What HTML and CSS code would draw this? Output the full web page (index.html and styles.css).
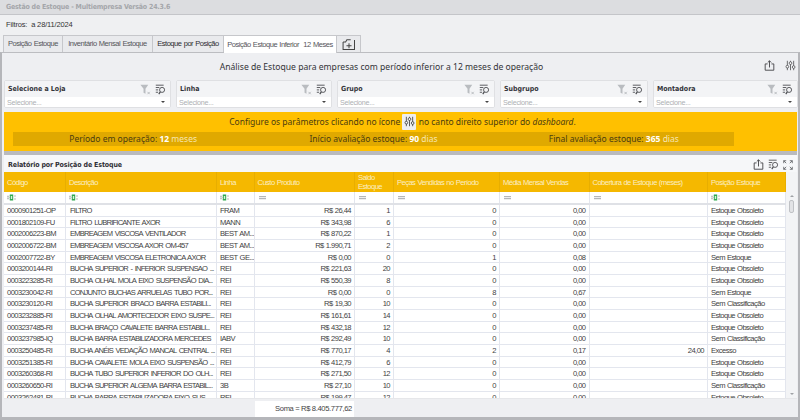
FILE: index.html
```html
<!DOCTYPE html>
<html lang="pt-BR">
<head>
<meta charset="utf-8">
<title>Gestão de Estoque</title>
<link rel="stylesheet" href="styles.css">
</head>
<body>
<svg class="defs" width="0" height="0" aria-hidden="true">
  <symbol id="i-export" viewBox="0 0 14 14"><path d="M4.5 5H1.5V13H12.5V5H9.5M7 9.5V1M4.8 3.2L7 1L9.2 3.2" fill="none" stroke="currentColor" stroke-width="1.2"/></symbol>
  <symbol id="i-sliders" viewBox="0 0 14 14"><g fill="none" stroke="currentColor" stroke-width="1"><path d="M3 1V13M7 1V13M11 1V13"/><circle cx="3" cy="8.5" r="1.7" fill="#fff"/><circle cx="7" cy="4" r="1.7" fill="#fff"/><circle cx="11" cy="9" r="1.7" fill="#fff"/></g></symbol>
  <symbol id="i-chooser" viewBox="0 0 14 14"><g fill="none" stroke="currentColor" stroke-width="1.1"><path d="M1 1.5H11M1 4.5H5.5M1 7.5H4M1 10.5H4"/><circle cx="9" cy="7.5" r="3.2"/><path d="M6.8 10L4.8 12.8" stroke-width="1.5"/></g></symbol>
  <symbol id="i-clear" viewBox="0 0 14 14"><path d="M0.5 1H10.5L7 6V12.5L4.5 11V6Z" fill="#b9bcc0"/><path d="M9.5 10L12.5 13M12.5 10L9.5 13" stroke="#a8abb0" stroke-width="0.9"/></symbol>
  <symbol id="i-full" viewBox="0 0 14 14"><path d="M1 4.5V1H4.5M1 1L4.5 4.5M13 4.5V1H9.5M13 1L9.5 4.5M1 9.5V13H4.5M1 13L4.5 9.5M13 9.5V13H9.5M13 13L9.5 9.5" fill="none" stroke="currentColor" stroke-width="1.1"/></symbol>
  <symbol id="i-newtab" viewBox="0 0 16 13"><path d="M1 3.5H4L5.5 1H10M1 3.5V12.5H14.5V1.2" fill="none" stroke="currentColor" stroke-width="1.2"/><path d="M8 5V11M5 8H11" stroke="currentColor" stroke-width="1.2"/></symbol>
  <symbol id="i-text" viewBox="0 0 9 7"><path d="M0 1.5L2 3.5L0 5.5M2 1.5L0 3.5L2 5.5" fill="none" stroke="#8a8d92" stroke-width=".6"/><rect x="2.8" y=".5" width="3.4" height="6" fill="#2fa84f"/><rect x="3.8" y="2" width="1.4" height="3" fill="#d8f0dd"/><path d="M7.5 2H8.5M7.5 5H8.5" stroke="#777" stroke-width="1"/></symbol>
  <symbol id="i-eq" viewBox="0 0 9 7"><path d="M1 2.7H8M1 4.7H8" stroke="#a3a6ab" stroke-width="1"/></symbol>
</svg>

<div class="app">
  <div class="titlebar">Gestão de Estoque - Multiempresa Versão 24.3.6</div>
  <div class="filterbar">Filtros:&nbsp; a 28/11/2024</div>

  <div class="tabs">
    <div class="tab t1">Posição Estoque</div>
    <div class="tab t2">Inventário Mensal Estoque</div>
    <div class="tab t3 dark">Estoque por Posição</div>
    <div class="tab t4 active">Posição Estoque Inferior&nbsp; 12 Meses</div>
    <div class="tab t5"><svg class="newtab"><use href="#i-newtab"/></svg></div>
  </div>

  <div class="panel">
    <div class="heading">
      <div class="heading-title">Análise de Estoque para empresas com período inferior a 12 meses de operação</div>
      <div class="heading-icons">
        <svg class="ico"><use href="#i-export"/></svg>
        <svg class="ico"><use href="#i-sliders"/></svg>
      </div>
    </div>

    <div class="filters">
      <div class="fcard"><div class="fhead"><b>Selecione a Loja</b><svg class="ico-s"><use href="#i-clear"/></svg><svg class="ico-s dark-i"><use href="#i-chooser"/></svg></div><div class="finput"><span>Selecione...</span><i class="caret"></i></div></div>
      <div class="fcard"><div class="fhead"><b>Linha</b><svg class="ico-s"><use href="#i-clear"/></svg><svg class="ico-s dark-i"><use href="#i-chooser"/></svg></div><div class="finput"><span>Selecione...</span><i class="caret"></i></div></div>
      <div class="fcard"><div class="fhead"><b>Grupo</b><svg class="ico-s"><use href="#i-clear"/></svg><svg class="ico-s dark-i"><use href="#i-chooser"/></svg></div><div class="finput"><span>Selecione...</span><i class="caret"></i></div></div>
      <div class="fcard"><div class="fhead"><b>Subgrupo</b><svg class="ico-s"><use href="#i-clear"/></svg><svg class="ico-s dark-i"><use href="#i-chooser"/></svg></div><div class="finput"><span>Selecione...</span><i class="caret"></i></div></div>
      <div class="fcard"><div class="fhead"><b>Montadora</b><svg class="ico-s"><use href="#i-clear"/></svg><svg class="ico-s dark-i"><use href="#i-chooser"/></svg></div><div class="finput"><span>Selecione...</span><i class="caret"></i></div></div>
    </div>

    <div class="notice">
      <div class="notice-top">Configure os parâmetros clicando no ícone <span class="notice-icon"><svg class="ico-n"><use href="#i-sliders"/></svg></span> no canto direito superior do <em>dashboard</em>.</div>
      <div class="notice-bar">
        <div>Período em operação: <b>12</b> <span>meses</span></div>
        <div>Início avaliação estoque: <b>90</b> <span>dias</span></div>
        <div>Final avaliação estoque: <b>365</b> <span>dias</span></div>
      </div>
    </div>

    <div class="report">
      <div class="report-head">
        <b>Relatório por Posição de Estoque</b>
        <div class="report-icons">
          <svg class="ico"><use href="#i-export"/></svg>
          <svg class="ico"><use href="#i-chooser"/></svg>
          <svg class="ico-f"><use href="#i-full"/></svg>
        </div>
      </div>

      <div class="grid-wrap">
        <div class="grid-main">
          <div class="row hdr">
            <div>Código</div><div>Descrição</div><div>Linha</div><div>Custo Produto</div><div>Saldo Estoque</div><div>Peças Vendidas no Período</div><div>Média Mensal Vendas</div><div>Cobertura de Estoque (meses)</div><div>Posição Estoque</div>
          </div>
          <div class="row flt">
            <div><svg class="fi"><use href="#i-text"/></svg></div><div><svg class="fi"><use href="#i-text"/></svg></div><div><svg class="fi"><use href="#i-text"/></svg></div><div><svg class="fi"><use href="#i-eq"/></svg></div><div><svg class="fi"><use href="#i-eq"/></svg></div><div><svg class="fi"><use href="#i-eq"/></svg></div><div><svg class="fi"><use href="#i-eq"/></svg></div><div><svg class="fi"><use href="#i-eq"/></svg></div><div><svg class="fi"><use href="#i-text"/></svg></div>
          </div>
          <div class="rows">
            <div class="row"><div>0000901251-OP</div><div>FILTRO</div><div>FRAM</div><div class="r">R$ 26,44</div><div class="r">1</div><div class="r">0</div><div class="r">0,00</div><div class="r"></div><div>Estoque Obsoleto</div></div>
            <div class="row"><div>0001802109-FU</div><div>FILTRO LUBRIFICANTE AXOR</div><div>MANN</div><div class="r">R$ 343,98</div><div class="r">6</div><div class="r">0</div><div class="r">0,00</div><div class="r"></div><div>Estoque Obsoleto</div></div>
            <div class="row"><div>0002006223-BM</div><div>EMBREAGEM VISCOSA VENTILADOR</div><div>BEST AM...</div><div class="r">R$ 870,22</div><div class="r">1</div><div class="r">0</div><div class="r">0,00</div><div class="r"></div><div>Estoque Obsoleto</div></div>
            <div class="row"><div>0002006722-BM</div><div>EMBREAGEM VISCOSA AXOR OM-457</div><div>BEST AM...</div><div class="r">R$ 1.990,71</div><div class="r">2</div><div class="r">0</div><div class="r">0,00</div><div class="r"></div><div>Estoque Obsoleto</div></div>
            <div class="row"><div>0002007722-BY</div><div>EMBREAGEM VISCOSA ELETRONICA AXOR</div><div>BEST GE...</div><div class="r">R$ 0,00</div><div class="r">0</div><div class="r">1</div><div class="r">0,08</div><div class="r"></div><div>Sem Estoque</div></div>
            <div class="row"><div>0003200144-RI</div><div>BUCHA SUPERIOR - INFERIOR SUSPENSAO ...</div><div>REI</div><div class="r">R$ 221,63</div><div class="r">20</div><div class="r">0</div><div class="r">0,00</div><div class="r"></div><div>Estoque Obsoleto</div></div>
            <div class="row"><div>0003223285-RI</div><div>BUCHA OLHAL MOLA EIXO SUSPENSÃO DIA...</div><div>REI</div><div class="r">R$ 550,39</div><div class="r">8</div><div class="r">0</div><div class="r">0,00</div><div class="r"></div><div>Estoque Obsoleto</div></div>
            <div class="row"><div>0003230042-RI</div><div>CONJUNTO BUCHAS ARRUELAS TUBO POR...</div><div>REI</div><div class="r">R$ 0,00</div><div class="r">0</div><div class="r">8</div><div class="r">0,67</div><div class="r"></div><div>Sem Estoque</div></div>
            <div class="row"><div>0003230120-RI</div><div>BUCHA SUPERIOR BRACO BARRA ESTABILI...</div><div>REI</div><div class="r">R$ 19,30</div><div class="r">10</div><div class="r">0</div><div class="r">0,00</div><div class="r"></div><div>Sem Classificação</div></div>
            <div class="row"><div>0003232885-RI</div><div>BUCHA OLHAL AMORTECEDOR EIXO SUSPE...</div><div>REI</div><div class="r">R$ 161,61</div><div class="r">14</div><div class="r">0</div><div class="r">0,00</div><div class="r"></div><div>Estoque Obsoleto</div></div>
            <div class="row"><div>0003237485-RI</div><div>BUCHA BRAÇO CAVALETE BARRA ESTABILI...</div><div>REI</div><div class="r">R$ 432,18</div><div class="r">12</div><div class="r">0</div><div class="r">0,00</div><div class="r"></div><div>Estoque Obsoleto</div></div>
            <div class="row"><div>0003237985-IQ</div><div>BUCHA BARRA ESTABILIZADORA MERCEDES</div><div>IABV</div><div class="r">R$ 292,49</div><div class="r">10</div><div class="r">0</div><div class="r">0,00</div><div class="r"></div><div>Sem Classificação</div></div>
            <div class="row"><div>0003250485-RI</div><div>BUCHA ANÉIS VEDAÇÃO MANCAL CENTRAL ...</div><div>REI</div><div class="r">R$ 770,17</div><div class="r">4</div><div class="r">2</div><div class="r">0,17</div><div class="r">24,00</div><div>Excesso</div></div>
            <div class="row"><div>0003251385-RI</div><div>BUCHA CAVALETE MOLA EIXO SUSPENSÃO ...</div><div>REI</div><div class="r">R$ 412,79</div><div class="r">6</div><div class="r">0</div><div class="r">0,00</div><div class="r"></div><div>Estoque Obsoleto</div></div>
            <div class="row"><div>0003260368-RI</div><div>BUCHA TUBO SUPERIOR INFERIOR DO OLH...</div><div>REI</div><div class="r">R$ 271,50</div><div class="r">12</div><div class="r">0</div><div class="r">0,00</div><div class="r"></div><div>Estoque Obsoleto</div></div>
            <div class="row"><div>0003260650-RI</div><div>BUCHA SUPERIOR ALGEMA BARRA ESTABIL...</div><div>3B</div><div class="r">R$ 27,10</div><div class="r">10</div><div class="r">0</div><div class="r">0,00</div><div class="r"></div><div>Sem Classificação</div></div>
            <div class="row"><div>0003262481-RI</div><div>BUCHA BARRA ESTABILIZADORA EIXO SUS...</div><div>REI</div><div class="r">R$ 199,47</div><div class="r">12</div><div class="r">0</div><div class="r">0,00</div><div class="r"></div><div>Estoque Obsoleto</div></div>
          </div>
        </div>
        <div class="scroll-area">
          <div class="scroll-top"></div>
          <div class="scroll-track"><i class="arrow up"></i><i class="thumb"></i><i class="arrow down"></i></div>
        </div>
      </div>

      <div class="footer"><div class="sum">Soma = R$ 8.405.777,62</div></div>
    </div>
  </div>
</div>
</body>
</html>
```
FILE: styles.css
```css
* { box-sizing: border-box; }
html, body { margin: 0; height: 100%; overflow: hidden; }
body { font-family: "Liberation Sans", Arial, sans-serif; color: #3f3f42; background: #eff0f2; }
.defs { position: absolute; }
.app { width: 800px; height: 420px; display: flex; flex-direction: column; overflow: hidden; }

.titlebar { height: 15px; padding-left: 6px; background: #dcdde0; border-bottom: 1px solid #c4c5c9; font: bold 7px/14px "DejaVu Sans Condensed", "DejaVu Sans", sans-serif; letter-spacing: -.2px; color: #a4a6aa; }
.filterbar { height: 20px; padding-left: 6px; font-size: 7.5px; letter-spacing: -.15px; line-height: 19px; color: #333; background: #eff0f2; }

.tabs { height: 17px; display: flex; padding-left: 3px; align-items: flex-end; position: relative; z-index: 1; }
.tab { height: 17px; font-size: 7.5px; letter-spacing: -.45px; word-spacing: .5px; line-height: 16px; text-align: center; color: #55555a; background: #e9eaed; border: 1px solid #c6c7cb; border-bottom: 0; border-left: 0; white-space: nowrap; }
.t1 { width: 60px; border-left: 1px solid #c6c7cb; }
.t2 { width: 90px; }
.t3 { width: 71px; }
.t4 { width: 113px; height: 18px; background: #fff; line-height: 17px; margin-bottom: -1px; color: #55555a; }
.t5 { width: 24px; display: flex; align-items: center; justify-content: center; }
.dark { color: #2c2c30; }
.newtab { width: 14px; height: 11px; color: #444; }

.panel { flex: 1; min-height: 0; display: flex; flex-direction: column; background: #eeeff2; border: 2px solid #b5b6ba; border-top: 1px solid #bcbdc1; border-bottom: 3px solid #b5b6ba; padding: 0 1px 0 2px; }

.heading { height: 27px; flex: none; display: flex; align-items: center; position: relative; justify-content: center; }
.heading-title { font: 8.6px/14px "Noto Sans", sans-serif; color: #333337; margin: 0 38px 0 0; }
.heading-icons { position: absolute; right: 1px; top: 7px; display: flex; gap: 10px; }
.ico { width: 11px; height: 11px; color: #4a4a4e; }
.ico-s { width: 11px; height: 11px; margin-left: 4px; }
.ico-f { width: 10px; height: 10px; color: #55585c; }
.dark-i { color: #44464a; }

.filters { display: grid; grid-template-columns: 167px 156px 158px 148px 145px; column-gap: 5px; height: 28px; flex: none; }
.fcard { border: 1px solid #dfe0e3; border-radius: 2px; display: flex; flex-direction: column; background: #fff; overflow: hidden; }
.fhead { height: 16px; background: #f3f4f6; display: flex; align-items: center; padding: 0 4px 0 3px; }
.fhead b { flex: 1; font: bold 7px "DejaVu Sans Condensed", "DejaVu Sans", sans-serif; color: #34343a; }
.finput { flex: 1; display: flex; align-items: center; justify-content: space-between; padding: 0 5px 0 2px; font-size: 7.2px; letter-spacing: -.25px; color: #aeafb3; background: #fff; }
.caret { width: 0; height: 0; border: 2px solid transparent; border-top: 2px solid #444; border-bottom: 0; }

.notice { margin-top: 4px; height: 39px; flex: none; background: #ffc000; color: #4b3c10; padding: 1px 9px 0; font-family: "Noto Sans", sans-serif; font-size: 8.5px; }
.notice-top { height: 18px; line-height: 18px; text-align: center; margin-left: 4px; white-space: nowrap; }
.notice-icon { display: inline-flex; width: 14px; height: 16px; background: #eeeef0; align-items: center; justify-content: center; border-radius: 1px; vertical-align: middle; margin: -2px 0 0; }
.ico-n { width: 11px; height: 11px; color: #333; }
.notice-bar { height: 14px; width: 721px; margin-top: 1px; display: grid; grid-template-columns: 1fr 1fr 1fr; background: #e0a900; line-height: 14px; text-align: center; }
.notice-bar b { color: #fff; font-weight: 700; }
.notice-bar span { color: #f7e6b0; }

.report { border-top: 4px solid #b9babe; flex: 1; min-height: 0; display: flex; flex-direction: column; background: #f5f6f8; }
.report-head { height: 17px; flex: none; display: flex; align-items: center; justify-content: space-between; padding: 2px 3px 0 4px; background: #f6f7f9; }
.report-head b { font: bold 7px "DejaVu Sans Condensed", "DejaVu Sans", sans-serif; letter-spacing: -.12px; color: #303036; }
.report-icons { display: flex; gap: 4px; align-items: center; padding-right: 1px; }

.grid-wrap { flex: 1; min-height: 0; display: flex; overflow: hidden; background: #fff; }
.grid-main { width: 782px; flex: none; display: flex; flex-direction: column; }
.row { display: grid; grid-template-columns: 62px 151px 37.5px 100.5px 39px 106px 89.5px 118.5px 78px; }
.row > div { padding: 0 3px; font-size: 7.6px; letter-spacing: -.55px; word-spacing: .5px; line-height: 11px; color: #3f3f43; border-right: 1px solid #e3e6ee; white-space: nowrap; overflow: hidden; }
.rows { flex: 1; min-height: 0; overflow: hidden; }
.rows .row { height: 11.67px; border-bottom: 1px solid #e3e6ee; }
.rows .row > div:nth-child(2) { letter-spacing: -.8px; word-spacing: 1.2px; padding-left: 4px; }
.rows .r { text-align: right; }
.row.hdr { height: 20px; background: #f5b800; }
.row.hdr > div { display: flex; align-items: center; white-space: normal; line-height: 9px; color: #fbeec4; border-right: 1px solid #e8ae00; }
.row.flt { height: 13px; background: #fff; border-bottom: 2px solid #dfe1e6; }
.row.flt > div { display: flex; align-items: center; }
.fi { width: 9px; height: 7px; }

.scroll-area { flex: 1; display: flex; flex-direction: column; background: #f3f4f6; }
.scroll-top { height: 20px; background: #f3f4f6; }
.scroll-track { flex: 1; display: flex; flex-direction: column; align-items: center; padding-top: 3px; }
.arrow { width: 0; height: 0; border: 2px solid transparent; }
.arrow.up { border-top: 0; border-bottom: 2px solid #a0a2a6; }
.arrow.down { border-bottom: 0; border-top: 2px solid #a0a2a6; margin-top: auto; margin-bottom: 3px; }
.thumb { width: 5px; height: 13px; margin-top: 3px; background: #e2e3e6; border: 1px solid #bfc1c5; border-radius: 2px; }

.footer { height: 19px; flex: none; background: #eeeff2; padding: 2px 0 0 251px; border-top: 1px solid #e6e7ea; }
.sum { width: 99px; height: 16px; background: #fff; font-size: 7.6px; letter-spacing: -.35px; line-height: 16px; text-align: right; padding-right: 2px; color: #3f3f43; }
```
